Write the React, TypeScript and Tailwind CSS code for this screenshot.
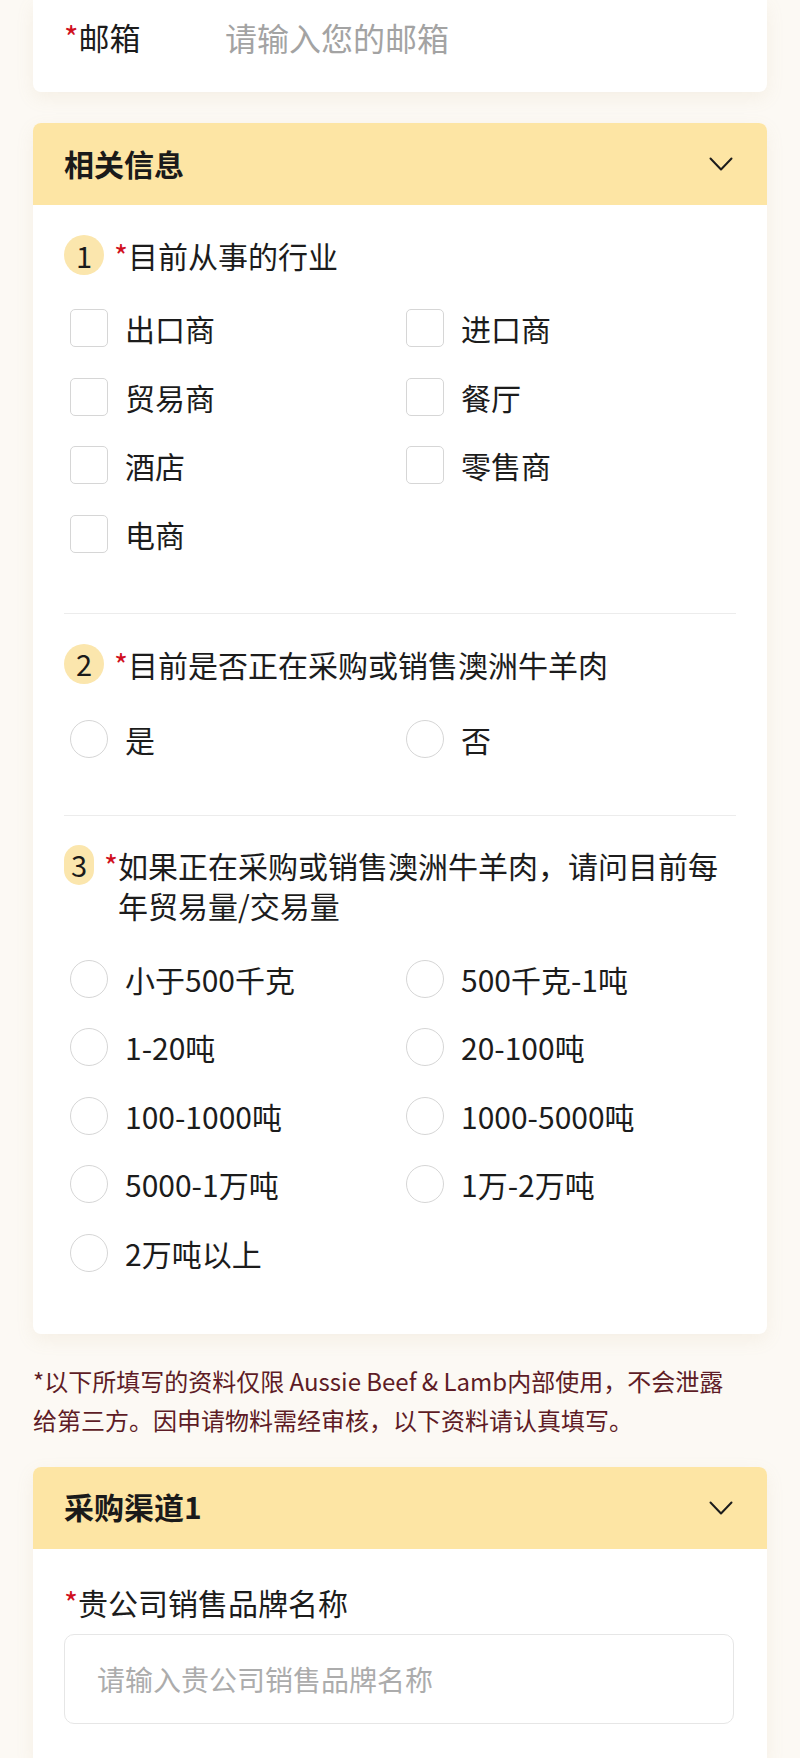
import React from 'react';

const font = { fontFamily: '"Noto Sans CJK SC", "Noto Sans", sans-serif' };

const Chevron: React.FC = () => (
  <svg width="24" height="14" viewBox="0 0 24 14" fill="none">
    <polyline points="1.5,1.5 12,12.5 22.5,1.5" stroke="#1c1c1c" strokeWidth="2" strokeLinecap="round" strokeLinejoin="round" />
  </svg>
);

const SectionHeader: React.FC<{ title: string }> = ({ title }) => (
  <div className="h-[82px] bg-[#fde5a4] flex items-center justify-between pl-[31px] pr-[34px]">
    <span className="text-[30px] font-bold text-[#1a1a1a] leading-none -mt-[3px]">{title}</span>
    <Chevron />
  </div>
);

const Question: React.FC<{ no: number; text: string }> = ({ no, text }) => (
  <div className="flex items-start">
    <div className="w-[40px] h-[40px] rounded-full bg-[#fbe6ad] flex items-center justify-center text-[29px] leading-none text-[#1a1a1a] mr-[10px]">
      {no}
    </div>
    <span className="shrink-0 text-[30px] leading-[40px] text-[#d0101e]">*</span>
    <span className="text-[30px] leading-[40px] text-[#1c1c1c]">{text}</span>
  </div>
);

const Options: React.FC<{ items: string[]; round?: boolean; className?: string }> = ({ items, round, className }) => (
  <div className={`grid grid-cols-2 gap-y-[30.5px] ${className ?? ''}`}>
    {items.map((item) => (
      <div key={item} className="flex items-center pl-[6px] h-[38px]">
        <div
          className={`w-[38px] h-[38px] shrink-0 border-[1.5px] border-[#d6d6d6] bg-white ${
            round ? 'rounded-full' : 'rounded-[5px]'
          }`}
        />
        <span className="ml-[17px] text-[30px] leading-none text-[#1c1c1c]">{item}</span>
      </div>
    ))}
  </div>
);

const industries = ['出口商', '进口商', '贸易商', '餐厅', '酒店', '零售商', '电商'];
const volumes = ['小于500千克', '500千克-1吨', '1-20吨', '20-100吨', '100-1000吨', '1000-5000吨', '5000-1万吨', '1万-2万吨', '2万吨以上'];

export default function App() {
  return (
    <div className="min-h-screen bg-[#fcf9f4] px-[33px]" style={font}>
      {/* Email */}
      <div className="h-[92px] bg-white rounded-b-[8px] flex items-start pt-[12px] pl-[31px] shadow-[0_6px_18px_rgba(190,160,110,0.10)]">
        <div className="w-[161px] text-[31px] leading-[50px] text-[#1c1c1c]">
          <span className="text-[#d0101e]">*</span>邮箱
        </div>
        <div className="text-[32px] leading-[50px] text-[#a3a3a3]">请输入您的邮箱</div>
      </div>

      {/* Related info */}
      <div className="mt-[31px] bg-white rounded-[8px] overflow-hidden shadow-[0_6px_18px_rgba(190,160,110,0.10)]">
        <SectionHeader title="相关信息" />
        <div className="px-[31px]">
          <div className="pt-[30px] pb-[60px] border-b border-[#ececec]">
            <Question no={1} text="目前从事的行业" />
            <Options items={industries} className="mt-[34px]" />
          </div>
          <div className="pt-[30px] pb-[57px] border-b border-[#ececec]">
            <Question no={2} text="目前是否正在采购或销售澳洲牛羊肉" />
            <Options items={['是', '否']} round className="mt-[36px]" />
          </div>
          <div className="pt-[29px] pb-[62px]">
            <Question no={3} text="如果正在采购或销售澳洲牛羊肉，请问目前每年贸易量/交易量" />
            <Options items={volumes} round className="mt-[35px]" />
          </div>
        </div>
      </div>

      {/* Note */}
      <p className="mt-[27px] text-[24px] leading-[39px] text-[#5e1c26]">
        *以下所填写的资料仅限 Aussie Beef &amp; Lamb内部使用，不会泄露
        <br />
        给第三方。因申请物料需经审核，以下资料请认真填写。
      </p>

      {/* Purchase channel */}
      <div className="mt-[28px] bg-white rounded-t-[8px] overflow-hidden shadow-[0_6px_18px_rgba(190,160,110,0.10)] pb-[40px]">
        <SectionHeader title="采购渠道1" />
        <div className="px-[31px] pt-[33px]">
          <div className="text-[30px] leading-[40px] text-[#1c1c1c]">
            <span className="text-[#d0101e]">*</span>贵公司销售品牌名称
          </div>
          <div className="mt-[12px] h-[90px] border-[1.5px] border-[#e6e6e6] rounded-[10px] flex items-center pl-[32px] mr-[2px]">
            <span className="text-[28px] leading-none text-[#acacac]">请输入贵公司销售品牌名称</span>
          </div>
        </div>
      </div>
    </div>
  );
}
